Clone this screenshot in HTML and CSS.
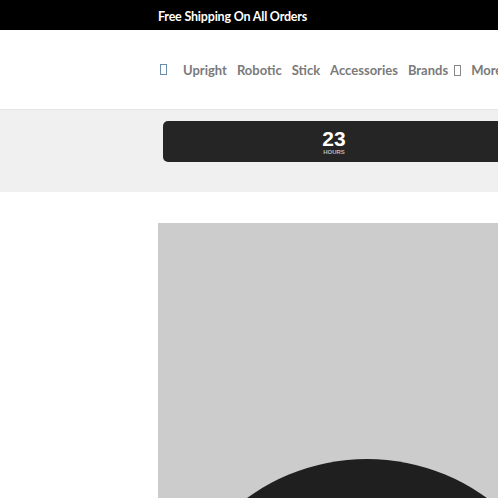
FILE: index.html
```html
<!DOCTYPE html>
<html lang="en">
<head>
    <meta charset="UTF-8">
    <meta name="viewport" content="width=device-width, initial-scale=1.0">
    <title>Vacuum Store</title>
    <link rel="stylesheet" href="styles.css">
</head>
<body>
    <div class="topbar">
        <div class="inner">
            <span class="shipping">Free Shipping On All Orders</span>
        </div>
    </div>

    <div class="header">
        <div class="inner">
            <nav class="nav">
                <span class="tofu"></span>
                <a href="#">Upright</a>
                <a href="#">Robotic</a>
                <a href="#">Stick</a>
                <a href="#">Accessories</a>
                <a href="#" class="has-menu">Brands <span class="tofu"></span></a>
                <a href="#">More</a>
            </nav>
        </div>
    </div>

    <div class="countdown-band">
        <div class="inner">
            <div class="countdown">
                <div class="unit">
                    <span class="num">23</span>
                    <span class="label">HOURS</span>
                </div>
            </div>
        </div>
    </div>

    <div class="product">
        <div class="inner">
            <div class="image">
                <div class="disc"></div>
            </div>
        </div>
    </div>
</body>
</html>
```

FILE: styles.css
```css
* {
    box-sizing: border-box;
    margin: 0;
    padding: 0;
}

body {
    font-family: Lato, 'Liberation Sans', sans-serif;
    background-color: white;
    overflow: hidden;
    height: 498px;
}

.inner {
    padding-left: 158px;
    width: 700px;
}

.topbar {
    background-color: black;
    height: 30px;
    display: flex;
    align-items: center;
    padding-bottom: 2px;
}

.shipping {
    color: white;
    font-weight: bold;
    font-size: 12.5px;
    letter-spacing: -0.2px;
}

.header {
    height: 80px;
}

.header .inner {
    height: 80px;
    display: flex;
    align-items: center;
    border-bottom: 1px solid #e6e6e6;
}

.nav {
    display: flex;
    align-items: center;
    gap: 10px;
    padding-left: 2px;
}

.nav a {
    color: #7a7a7a;
    text-decoration: none;
    font-size: 13px;
    font-weight: bold;
    display: flex;
    align-items: center;
    gap: 6px;
}

.tofu {
    display: inline-block;
    width: 7px;
    height: 11px;
    border: 1px solid #888;
}

.has-menu .tofu {
    margin-top: 2px;
}

.nav > .tofu {
    border-color: #6a8cab;
    margin-right: 6px;
}

.countdown-band {
    background-color: #f0f0f0;
    height: 82px;
}

.countdown-band .inner {
    padding-top: 11px;
    padding-left: 163px;
}

.countdown {
    background-color: #252525;
    width: 342px;
    height: 41px;
    border-radius: 5px;
    display: flex;
    justify-content: center;
    align-items: center;
}

.unit {
    display: flex;
    flex-direction: column;
    align-items: center;
}

.num {
    color: white;
    font-family: 'Liberation Sans', Arial, sans-serif;
    font-weight: bold;
    font-size: 21px;
    line-height: 21px;
    margin-top: -1px;
}

.label {
    color: #bbb;
    font-family: 'Liberation Sans', Arial, sans-serif;
    font-weight: bold;
    font-size: 6px;
}

.product .inner {
    padding-top: 31px;
}

.image {
    background-color: #cccccc;
    width: 418px;
    height: 500px;
    position: relative;
    overflow: hidden;
}

.disc {
    position: absolute;
    width: 408px;
    height: 408px;
    border-radius: 50%;
    background-color: #1f1f1f;
    left: 5px;
    top: 236px;
}
```
